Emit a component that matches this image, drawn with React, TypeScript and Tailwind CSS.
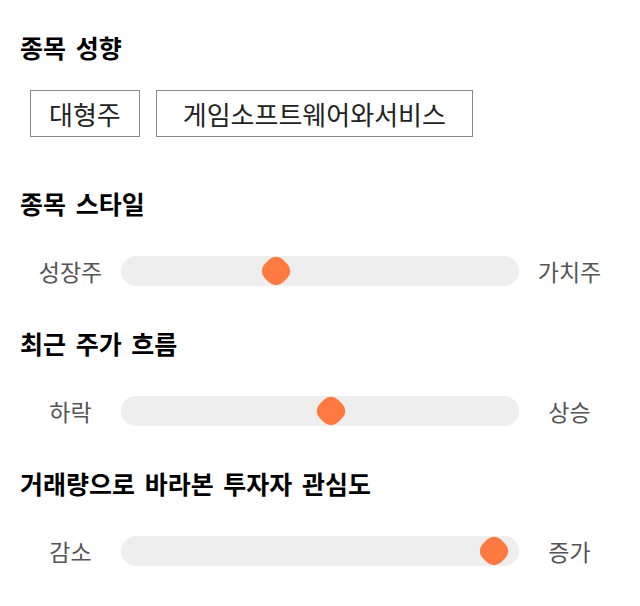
import React from "react";

const FONT = { fontFamily: '"Noto Sans CJK KR", "Noto Sans", sans-serif' };

function Heading({ children }: { children: React.ReactNode }) {
  return <h2 className="text-[25px] font-bold leading-[30px] text-black [word-spacing:4px]">{children}</h2>;
}

function Slider({ left, right, pos }: { left: string; right: string; pos: number }) {
  return (
    <div className="flex items-center h-[40px]">
      <div className="w-[101px] text-center text-[23px] text-[#555]">{left}</div>
      <div className="relative flex-1 h-[30px] rounded-full bg-[#eeeeee]">
        <div
          className="absolute top-[2px] w-[26px] h-[26px] rounded-[10px] bg-[#ff7a40] rotate-45"
          style={{ left: pos - 13 }}
        />
      </div>
      <div className="w-[101px] text-center text-[23px] text-[#555]">{right}</div>
    </div>
  );
}

export default function App() {
  return (
    <div className="w-[640px] h-[606px] bg-white px-[20px] pt-[32px]" style={FONT}>
      <Heading>종목 성향</Heading>
      <div className="mt-[28px] ml-[10px] flex gap-[16px]">
        <div className="h-[47px] px-[18px] flex items-center border border-[#888] text-[26px] text-[#222]">대형주</div>
        <div className="h-[47px] px-[26px] flex items-center border border-[#888] text-[26px] text-[#222]">게임소프트웨어와서비스</div>
      </div>
      <div className="mt-[51px]">
        <Heading>종목 스타일</Heading>
        <div className="mt-[33px]">
          <Slider left="성장주" right="가치주" pos={155} />
        </div>
      </div>
      <div className="mt-[37px]">
        <Heading>최근 주가 흐름</Heading>
        <div className="mt-[33px]">
          <Slider left="하락" right="상승" pos={210} />
        </div>
      </div>
      <div className="mt-[37px]">
        <Heading>거래량으로 바라본 투자자 관심도</Heading>
        <div className="mt-[33px]">
          <Slider left="감소" right="증가" pos={373} />
        </div>
      </div>
    </div>
  );
}
